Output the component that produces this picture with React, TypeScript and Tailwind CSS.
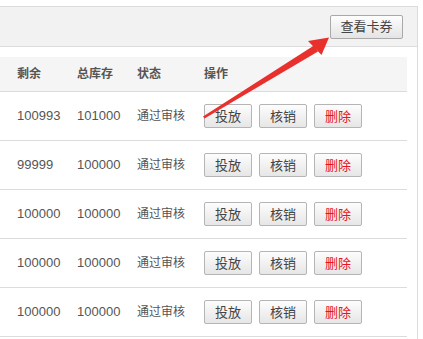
import React from "react";

const rows = [
  ["100993", "101000"],
  ["99999", "100000"],
  ["100000", "100000"],
  ["100000", "100000"],
  ["100000", "100000"],
];

const btn =
  "h-[24px] w-[48px] flex items-center justify-center border border-[#b5b5b5] rounded-[2px] bg-gradient-to-b from-[#fdfdfd] to-[#e6e6e6] text-[13px] leading-none";

export default function App() {
  return (
    <div
      className="relative w-[423px] h-[339px] overflow-hidden bg-white pt-[6px] text-[#555]"
      style={{ fontFamily: '"Liberation Sans", "Noto Sans CJK SC", sans-serif' }}
    >
      <div className="w-[418px] h-[41px] bg-[#f2f2f2] border-t border-b border-r border-[#dcdcdc] flex items-center justify-end pr-[14px]">
        <div className="h-[24px] w-[73px] flex items-center justify-center border border-[#a9a9a9] rounded-[2px] bg-gradient-to-b from-[#fefefe] to-[#e4e4e4] text-[13px] text-[#444] leading-none">
          查看卡券
        </div>
      </div>
      <div className="w-[418px] h-[300px] border-r border-[#dcdcdc] pt-[10px]">
        <div className="w-[407px] h-[35px] bg-[#f5f5f5] border-b border-[#dcdcdc] flex items-center pl-[17px] text-[12px] font-bold text-[#555]">
          <div className="w-[60px]">剩余</div>
          <div className="w-[60px]">总库存</div>
          <div className="w-[67px]">状态</div>
          <div>操作</div>
        </div>
        {rows.map((r, i) => (
          <div
            key={i}
            className="w-[407px] h-[49px] border-b border-[#dcdcdc] flex items-center pl-[17px] text-[12px] text-[#555]"
          >
            <div className="w-[60px] text-[13px]">{r[0]}</div>
            <div className="w-[60px] text-[13px]">{r[1]}</div>
            <div className="w-[67px]">通过审核</div>
            <div className="flex gap-[7px] text-[#444]">
              <div className={btn}>投放</div>
              <div className={btn}>核销</div>
              <div className={btn + " text-[#e8141e]"}>删除</div>
            </div>
          </div>
        ))}
      </div>
      <svg
        className="absolute left-0 top-0 pointer-events-none"
        width="423"
        height="339"
        viewBox="0 0 423 339"
      >
        <path d="M203 116.5 L314 45.5 L318 51.5 L204.5 118.5 Z" fill="#e8302d" />
        <path d="M329 37.5 L308 41 L321.5 55 Z" fill="#e8302d" />
      </svg>
    </div>
  );
}
